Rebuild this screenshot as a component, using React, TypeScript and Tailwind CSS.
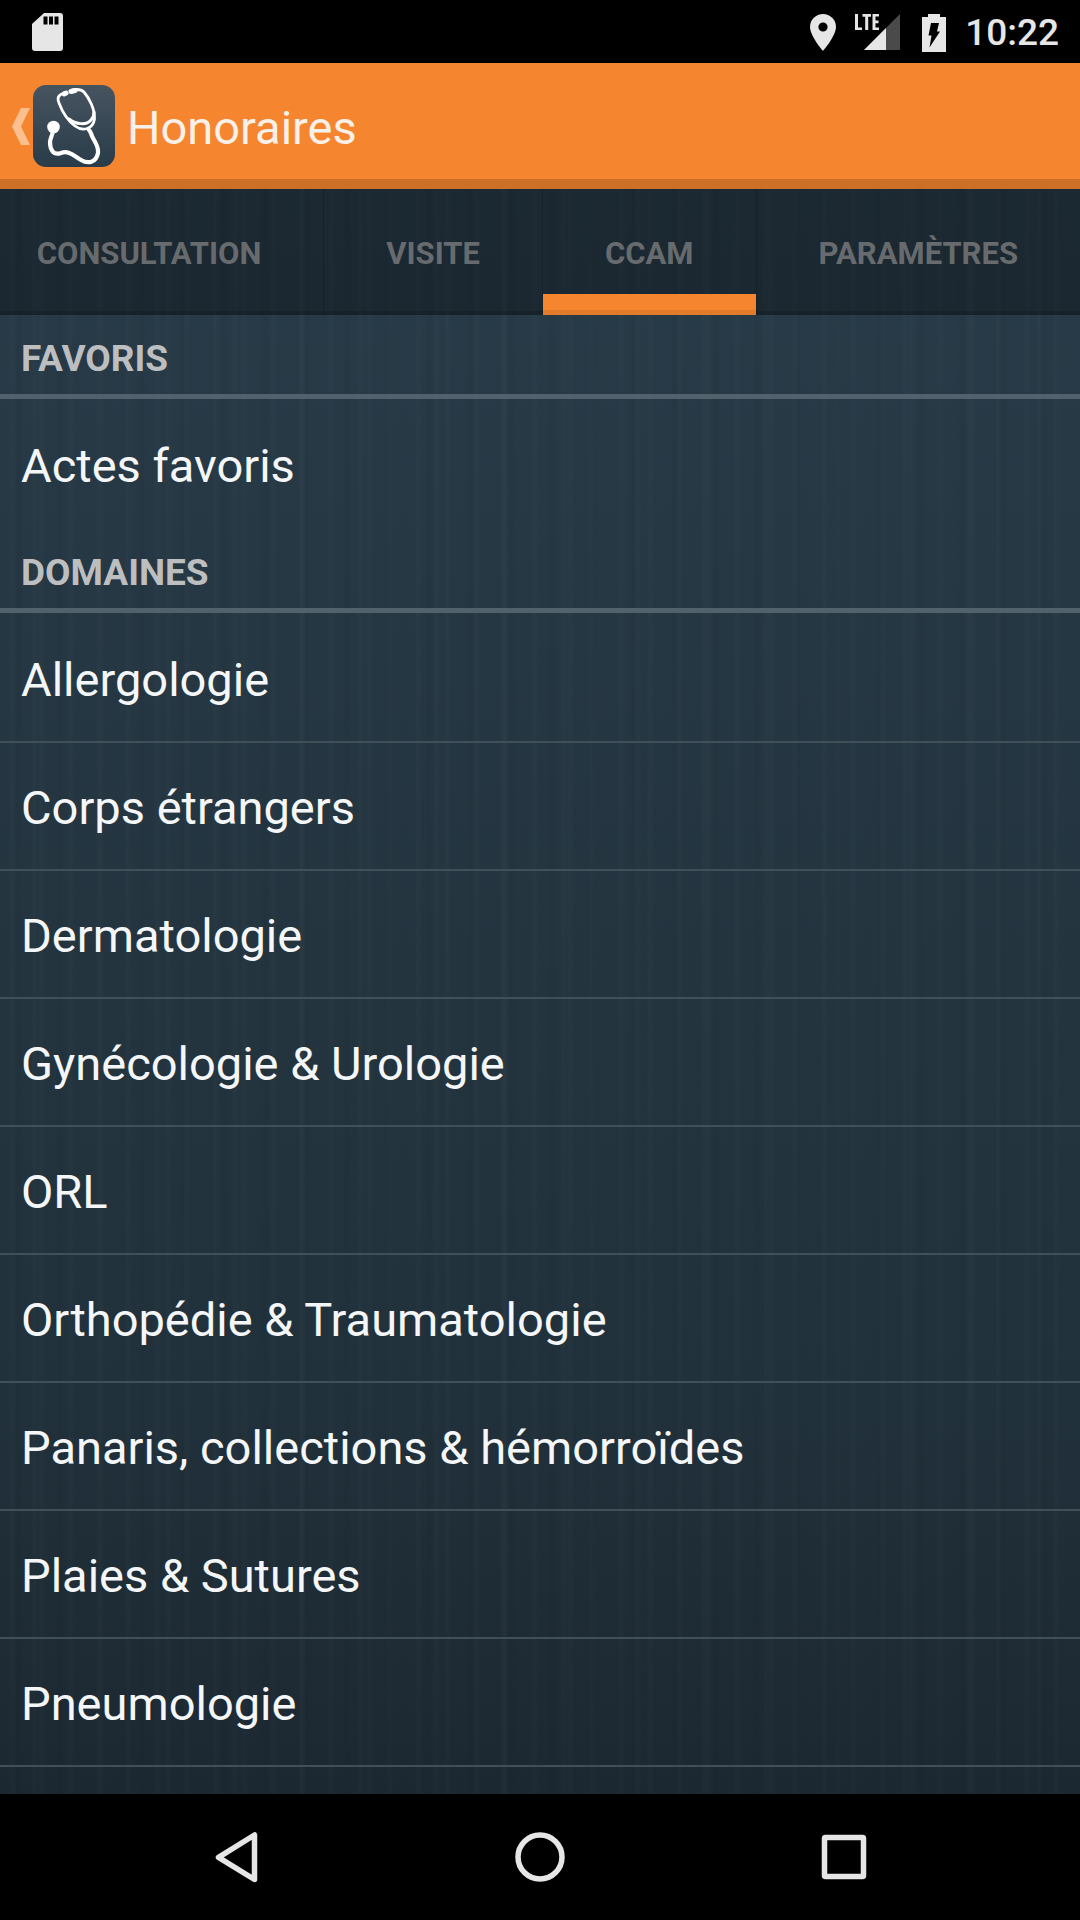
import type { ReactNode } from "react";

type Tab = {
  id: string;
  label: string;
};

type Section = {
  title: string;
  items: string[];
};

const tabs: Tab[] = [
  { id: "consultation", label: "CONSULTATION" },
  { id: "visite", label: "VISITE" },
  { id: "ccam", label: "CCAM" },
  { id: "parametres", label: "PARAMÈTRES" },
];

const sections: Section[] = [
  { title: "FAVORIS", items: ["Actes favoris"] },
  {
    title: "DOMAINES",
    items: [
      "Allergologie",
      "Corps étrangers",
      "Dermatologie",
      "Gynécologie & Urologie",
      "ORL",
      "Orthopédie & Traumatologie",
      "Panaris, collections & hémorroïdes",
      "Plaies & Sutures",
      "Pneumologie",
    ],
  },
];

const StatusBar = () => (
  <div className="flex h-[63px] items-center justify-between bg-black pl-8 pr-[21px] text-[#e6e6e6]">
    <svg viewBox="0 0 31 38" className="h-[38px] w-[31px]" fill="currentColor">
      <path d="M12 0h16a3 3 0 0 1 3 3v32a3 3 0 0 1-3 3H3a3 3 0 0 1-3-3V11z" />
      <path d="M11.500 3.500h4v8h-4zM17 3.500h4v8h-4zM22.500 3.500h4v8h-4z" fill="#000" />
    </svg>
    <div className="flex items-center pt-0.5">
      <svg viewBox="0 0 26 37" className="h-[37px] w-[26px]" fill="currentColor">
        <path fillRule="evenodd" d="M13 0a13 13 0 0 1 13 13c0 9-13 24-13 24S0 22 0 13A13 13 0 0 1 13 0zm0 8.400a4.600 4.600 0 1 0 0 9.200 4.600 4.600 0 0 0 0-9.200z" />
      </svg>
      <svg viewBox="0 0 46 37" className="ml-[19px] h-[37px] w-[46px]" fill="currentColor">
        <path d="M45 0v36H9z" fill="#4a4a4a" />
        <path d="M31 14V36H9z" />
        <path d="M0 0h3v13.500h4V16H0zM7.500 0H16v2.700h-2.800V16h-3V2.700H7.500zM17.500 0H24v2.600h-3.500v4h3v2.600h-3v4.200H24V16h-6.500z" />
      </svg>
      <svg viewBox="0 0 24 38" className="ml-[21px] h-[38px] w-6" fill="currentColor">
        <path d="M6 0h12v3h6v35H0V3h6z" />
        <path d="M9 9h8l-2 8.500h3L7.500 33.500l2-12H6.500z" fill="#000" />
      </svg>
      <time className="ml-[19px] text-[37px] leading-[44px] font-medium">10:22</time>
    </div>
  </div>
);

const AppLogo = () => (
  <svg viewBox="0 0 82 82" className="size-[82px]" fill="none">
    <defs>
      <linearGradient id="tile" x1="0" y1="0" x2="0" y2="1">
        <stop offset="0" stopColor="#465460" />
        <stop offset="1" stopColor="#2a3c49" />
      </linearGradient>
    </defs>
    <rect width="82" height="82" rx="13" fill="url(#tile)" />
    <g stroke="#fff" strokeLinecap="round" strokeLinejoin="round">
      <path d="M31 8C25 10 24 13 26 18C29 26 34 35 42 41C50 47 60 44 61.500 34C62 24 56 13 51 7C48 4 44 4 39 5" strokeWidth="2.800" />
      <path d="M36 34C42 39 53 41 58 35C60 33 61 30 61 27" strokeWidth="3" />
      <path d="M56 45C57 46 58 48 59 51C61 56 66 61 65 68C63 78 55 79 48 75C41 71 36 65 28 68C20 71 17 64 17 57C17 53 20 50 20 45" strokeWidth="4.200" />
      <path d="M31 9L33 8M38 6.500L42 5.500" strokeWidth="5" />
    </g>
    <circle cx="20.500" cy="42" r="6.300" fill="#fff" />
  </svg>
);

const ActionBar = () => (
  <header className="flex h-[126px] items-center border-b-[10px] border-[#cc7028] bg-[#f5862f] pt-2.5">
    <button aria-label="Retour" className="flex items-center pl-3">
      <svg viewBox="0 0 19 37" className="mr-0.5 h-[37px] w-[19px]">
        <path d="M9 0h9L9 18.500 18 37H9L0 18.500z" fill="#fbc08e" />
      </svg>
      <AppLogo />
    </button>
    <h1 className="ml-3 pt-1 text-[47px] leading-[56px] text-[#f8f1ea]">Honoraires</h1>
  </header>
);

const TabButton = ({ tab, active }: { tab: Tab; active: boolean }) => (
  <button
    role="tab"
    aria-selected={active}
    className="relative flex shrink-0 items-center px-[62px] pt-1 text-[31px] leading-[38px] font-bold text-[#686b6e]"
  >
    {tab.label}
    {active && <span className="absolute inset-x-0 bottom-0 h-[21px] border-b-[5px] border-[#e27b2a] bg-[#f5862f]" />}
  </button>
);

// the strip is scrolled to its end, so the first tab is cut off on the left
const TabBar = ({ activeTab }: { activeTab: string }) => (
  <nav role="tablist" className="flex h-[126px] justify-end divide-x divide-black/15 overflow-hidden bg-black/30 shadow-[inset_0_-4px_0_rgba(0,0,0,0.15)]">
    {tabs.map((tab) => (
      <TabButton key={tab.id} tab={tab} active={tab.id === activeTab} />
    ))}
  </nav>
);

const ListSection = ({ title, items }: Section) => (
  <section>
    <h2 className="mb-0.5 flex h-[84px] items-center border-b-[5px] border-[#52626d] px-[21px] pt-2 text-[37px] leading-[44px] font-bold text-[#bcbec0]">{title}</h2>
    <ul>
      {items.map((item) => (
        <li key={item} className="border-b-2 border-[#414f59] only:border-transparent">
          <a href="#" className="flex h-[126px] items-center px-[21px] pt-1 text-[47px] leading-[56px] text-[#f4f6f8]">
            {item}
          </a>
        </li>
      ))}
    </ul>
  </section>
);

const NavButton = ({ label, children }: { label: string; children: ReactNode }) => (
  <button aria-label={label} className="flex w-[304px] items-center justify-center">
    <svg viewBox="0 0 60 60" className="size-[60px]" fill="none" stroke="#e6e6e6" strokeWidth="5.500" strokeLinejoin="round">
      {children}
    </svg>
  </button>
);

const NavigationBar = () => (
  <footer className="flex h-[126px] justify-center bg-black">
    <NavButton label="Précédent">
      <path d="M48.500 8v44.500L12.500 30.300z" />
    </NavButton>
    <NavButton label="Accueil">
      <circle cx="30" cy="30" r="22" />
    </NavButton>
    <NavButton label="Applications récentes">
      <rect x="10.500" y="10.500" width="39" height="39" rx="1" />
    </NavButton>
  </footer>
);

const App = () => (
  <div className="flex min-h-screen flex-col font-['Roboto',sans-serif]">
    <StatusBar />
    <ActionBar />
    <main className="relative flex-1 bg-linear-to-b from-[#283b48] via-[#21313b] via-75% to-[#1c2831]">
      {/* faint brushed grain over the gradient */}
      <div className="pointer-events-none absolute inset-0 bg-[repeating-linear-gradient(90deg,transparent_0_8px,rgba(255,255,255,0.015)_12px,transparent_17px_29px),repeating-linear-gradient(90deg,transparent_0_14px,rgba(0,0,0,0.04)_19px,transparent_24px_41px),repeating-linear-gradient(90deg,transparent_0_30px,rgba(255,255,255,0.015)_34px,transparent_39px_67px)]" />
      <div className="relative">
        <TabBar activeTab="ccam" />
        {sections.map((section) => (
          <ListSection key={section.title} {...section} />
        ))}
      </div>
    </main>
    <NavigationBar />
  </div>
);

export default App;
